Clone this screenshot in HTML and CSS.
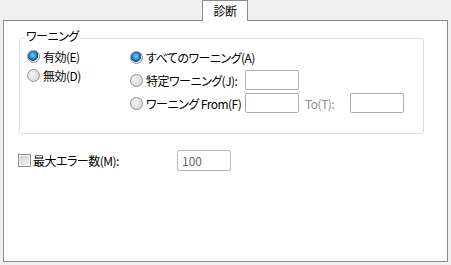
FILE: index.html
```html
<!DOCTYPE html>
<html lang="ja">
<head>
    <meta charset="UTF-8">
    <meta name="viewport" content="width=device-width, initial-scale=1.0">
    <title>診断</title>
    <link rel="stylesheet" href="styles.css">
</head>
<body>
    <div class="tabs">
        <div class="tab">診断</div>
    </div>

    <div class="panel">
        <div class="group">
            <span class="legend">ワーニング</span>
            <div class="cols">
                <div class="col-mode">
                    <label class="opt"><span class="radio on"></span>有効(E)</label>
                    <label class="opt"><span class="radio"></span>無効(D)</label>
                </div>
                <div class="col-range">
                    <label class="opt all"><span class="radio on"></span>すべてのワーニング(A)</label>
                    <label class="opt lead"><span class="radio"></span>特定ワーニング(J):</label>
                    <input class="field" type="text">
                    <label class="opt lead"><span class="radio"></span>ワーニング From(F)</label>
                    <input class="field" type="text">
                    <span class="muted to">To(T):</span>
                    <input class="field" type="text">
                </div>
            </div>
        </div>

        <div class="max-row">
            <label class="opt max-label"><span class="check"></span>最大エラー数(M):</label>
            <input class="field num" type="text" value="100" disabled>
        </div>
    </div>
</body>
</html>
```

FILE: styles.css
```css
body {
    margin: 0;
    height: 265px;
    overflow: hidden;
    background-color: #f0f0f0;
    color: #000;
    font-family: "Noto Sans CJK JP", sans-serif;
    font-size: 12px;
    letter-spacing: -0.5px;
    font-feature-settings: "palt";
}

.tabs {
    height: 20px;
    padding-left: 202px;
}

.tab {
    position: relative;
    z-index: 1;
    box-sizing: border-box;
    width: 46px;
    height: 21px;
    border: 1px solid #898c95;
    border-bottom: none;
    background-color: #fff;
    text-align: center;
    line-height: 19px;
}

.panel {
    box-sizing: border-box;
    height: 242px;
    margin: 0 3px;
    padding: 17px 23px 0 15px;
    border: 1px solid #898c95;
    background-color: #fff;
}

.group {
    position: relative;
    box-sizing: border-box;
    height: 96px;
    padding: 8px 0 0 7px;
    border: 1px solid #d5dfe5;
    border-radius: 3px;
}

.legend {
    position: absolute;
    top: -10px;
    left: 5px;
    padding: 0 1px;
    background-color: #fff;
    line-height: 14px;
}

.cols {
    display: flex;
}

.col-mode {
    width: 103px;
    display: flex;
    flex-direction: column;
}

.col-mode .opt {
    height: 19px;
}

.col-range {
    display: grid;
    grid-template-columns: 115px 54px 51px 54px;
    grid-auto-rows: 20px;
    row-gap: 3px;
    align-items: center;
}

.col-range .all {
    grid-column: 1 / -1;
}

.col-range .lead {
    grid-column: 1;
}

.opt {
    display: flex;
    align-items: center;
    gap: 3px;
    height: 20px;
    white-space: nowrap;
}

.radio {
    box-sizing: border-box;
    flex: none;
    width: 13px;
    height: 13px;
    border: 1px solid #8e9294;
    border-radius: 50%;
    background: radial-gradient(circle at 40% 40%, #f4f4f4 0%, #dadada 70%, #c9c9c9 100%);
}

.radio.on {
    background:
        radial-gradient(circle at 45% 40%, #7fd0f7 0%, #2c8fd3 35%, #0b4a86 58%, transparent 62%),
        radial-gradient(circle, #fff 0%, #e6e6e6 70%, #cfcfcf 100%);
}

.check {
    box-sizing: border-box;
    flex: none;
    width: 13px;
    height: 13px;
    border: 1px solid #8f8f8f;
    background: linear-gradient(135deg, #c8c8c8 0%, #e6e6e6 60%, #f6f6f6 100%);
    box-shadow: inset 0 0 0 1px #f4f4f4;
}

.field {
    box-sizing: border-box;
    width: 54px;
    height: 20px;
    margin: 0;
    padding: 0 4px;
    border: 1px solid #abadb3;
    border-radius: 2px;
    background-color: #fff;
    font: inherit;
}

.muted {
    color: #8d8d8d;
}

.to {
    padding-left: 6px;
}

.max-row {
    display: flex;
    align-items: center;
    height: 21px;
    margin: 16px 0 0 -1px;
}

.max-label {
    width: 159px;
    gap: 2px;
}

.num {
    height: 21px;
    color: #6d6d6d;
    border-color: #b5b8bc;
}
```
